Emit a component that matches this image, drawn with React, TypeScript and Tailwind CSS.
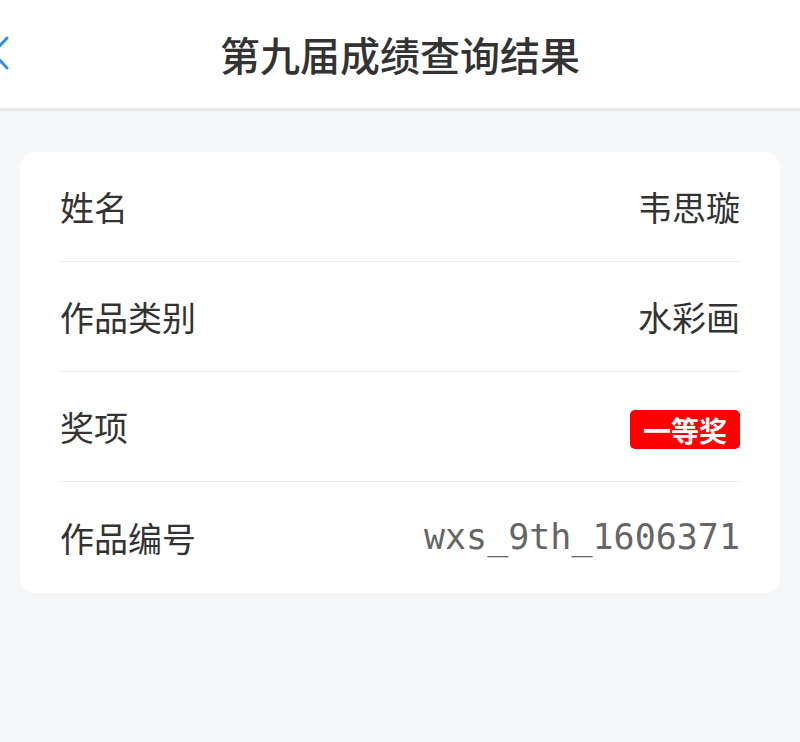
export default function App() {
  const rows = [
    { label: '姓名', value: '韦思璇' },
    { label: '作品类别', value: '水彩画' },
    { label: '奖项', badge: '一等奖' },
    { label: '作品编号', code: 'wxs_9th_1606371' },
  ];

  return (
    <main
      className="min-h-[742px] bg-[#f5f6f8] text-[#333]"
      style={{ fontFamily: '"Noto Sans CJK SC", "Noto Sans", sans-serif' }}
    >
      <header className="relative flex h-[111px] items-center justify-center border-b-[3px] border-[#e8e9eb] bg-white">
        <svg className="absolute left-[-10px] top-[36px]" width="20" height="34" viewBox="0 0 20 34" fill="none">
          <path d="M17 2 L3 17 L17 32" stroke="#3b8fd9" strokeWidth="3" strokeLinecap="round" strokeLinejoin="round" />
        </svg>
        <h1 className="text-[40px] font-medium leading-none text-[#333]">第九届成绩查询结果</h1>
      </header>

      <section className="mx-5 mt-[41px] rounded-2xl bg-white px-10">
        {rows.map((r, i) => (
          <div
            key={r.label}
            className={`flex items-center justify-between ${i < rows.length - 1 ? 'h-[110px] border-b border-[#ececec]' : 'h-[111px]'}`}
          >
            <span className="text-[34px] leading-none">{r.label}</span>
            {r.value && <span className="text-[34px] leading-none">{r.value}</span>}
            {r.badge && (
              <span className="mt-[6px] flex h-[39px] w-[110px] items-center justify-center rounded-[5px] bg-[#f00] text-[28px] font-bold leading-none text-white">
                {r.badge}
              </span>
            )}
            {r.code && (
              <span
                className="text-[35px] leading-none text-[#666]"
                style={{ fontFamily: '"DejaVu Sans Mono", monospace' }}
              >
                {r.code}
              </span>
            )}
          </div>
        ))}
      </section>
    </main>
  );
}
